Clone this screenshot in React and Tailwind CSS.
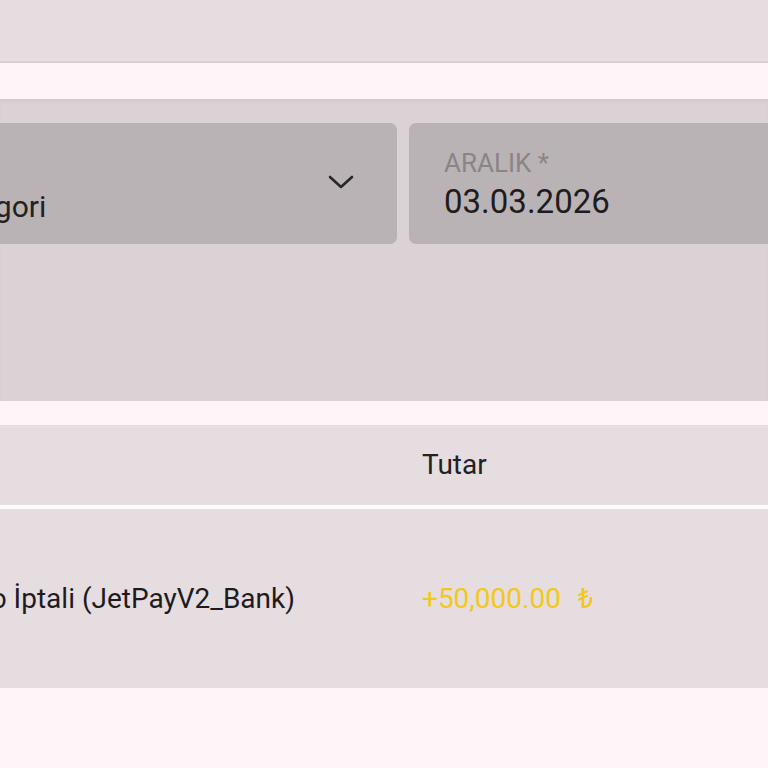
export default function App() {
  return (
    <div className="w-[768px] h-[768px] overflow-hidden bg-[#fff5f8] text-[#1f1b1d]" style={{ fontFamily: "Roboto, 'Liberation Sans', sans-serif" }}>
      <div className="h-[63px] bg-[#e6dde0] border-b-2 border-[#d9ced2]" />
      <div className="h-[36px]" />
      <div className="h-[302px] bg-[#dbd2d5] pt-[24px] shadow-[inset_0_3px_3px_rgba(0,0,0,0.04)]">
        <div className="flex gap-[12px] ml-[-82px]">
          <div className="shrink-0 w-[479px] h-[121px] rounded-[7px] bg-[#b9b3b5] flex items-center justify-between pl-[16px] pr-[42px]">
            <div className="text-[30px] pt-[46px] text-[#222]">Kategori</div>
            <svg width="28" height="16" viewBox="0 0 28 16" fill="none" stroke="#2a2628" strokeWidth="2.6" strokeLinecap="round" strokeLinejoin="round" className="mt-[-4px]">
              <path d="M3 3 L14 13 L25 3" />
            </svg>
          </div>
          <div className="shrink-0 w-[500px] h-[121px] rounded-[7px] bg-[#b9b3b5] pl-[35px] pt-[25px]">
            <div className="text-[26px] leading-[30px] text-[#8a8487]">ARALIK *</div>
            <div className="text-[33px] leading-[40px] mt-[4px] text-[#1e1c1d]">03.03.2026</div>
          </div>
        </div>
      </div>
      <div className="h-[24px]" />
      <div className="bg-[#e5dde0]">
        <div className="h-[80px] flex items-center">
          <div className="w-[422px] shrink-0" />
          <div className="text-[28px] text-[#222]">Tutar</div>
        </div>
        <div className="h-[4px] bg-[#fdfafb]" />
        <div className="h-[179px] flex items-center">
          <div className="w-[422px] shrink-0 flex justify-end pr-[127px] overflow-hidden">
            <div className="text-[28px] whitespace-nowrap text-[#1f1b1d]">Depozito İptali (JetPayV2_Bank)</div>
          </div>
          <div className="text-[28px] text-[#f2c81a] whitespace-nowrap">+50,000.00<span className="ml-[17px]">₺</span></div>
        </div>
      </div>
    </div>
  );
}
